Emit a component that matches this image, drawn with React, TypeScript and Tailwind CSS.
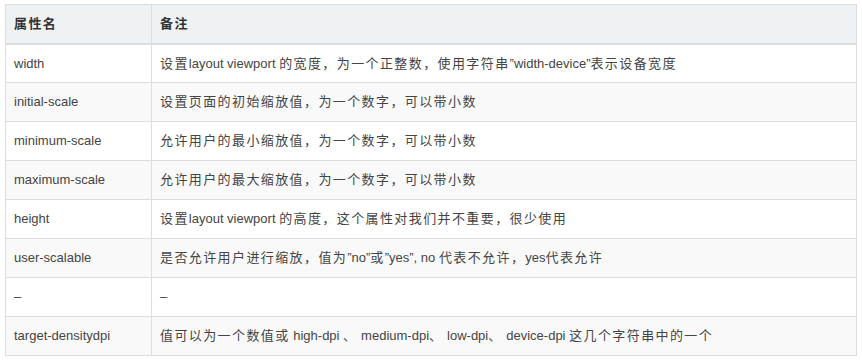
import React from "react";

const rows: [string, string][] = [
  ["width", "设置layout viewport 的宽度，为一个正整数，使用字符串”width-device”表示设备宽度"],
  ["initial-scale", "设置页面的初始缩放值，为一个数字，可以带小数"],
  ["minimum-scale", "允许用户的最小缩放值，为一个数字，可以带小数"],
  ["maximum-scale", "允许用户的最大缩放值，为一个数字，可以带小数"],
  ["height", "设置layout viewport 的高度，这个属性对我们并不重要，很少使用"],
  ["user-scalable", "是否允许用户进行缩放，值为”no”或”yes”, no 代表不允许，yes代表允许"],
  ["–", "–"],
  ["target-densitydpi", "值可以为一个数值或 high-dpi 、 medium-dpi、 low-dpi、 device-dpi 这几个字符串中的一个"],
];

function Mixed({ text }: { text: string }) {
  const parts = text.split(/([\u3000-\u303f\u4e00-\u9fff\uff00-\uffef]+)/);
  return (
    <>
      {parts.map((p, i) =>
        /[\u3000-\u303f\u4e00-\u9fff\uff00-\uffef]/.test(p) ? (
          <span key={i} className="tracking-[1.4px]">{p}</span>
        ) : (
          <span key={i}>{p}</span>
        )
      )}
    </>
  );
}

export default function App() {
  return (
    <div className="w-[862px] h-[361px] bg-white pt-[4px] pl-[5px]">
      <table
        className="w-[852px] border-collapse text-[13px] text-[#333]"
        style={{ fontFamily: '"Liberation Sans", Arial, "Noto Sans CJK SC", sans-serif' }}
      >
        <thead>
          <tr className="bg-[#eff2f5] h-[39px]">
            <th className="w-[146px] border border-[#dddddd] border-b-2 px-[8px] text-left font-bold">
              <Mixed text="属性名" />
            </th>
            <th className="border border-[#dddddd] border-b-2 px-[8px] text-left font-bold">
              <Mixed text="备注" />
            </th>
          </tr>
        </thead>
        <tbody>
          {rows.map(([a, b], i) => (
            <tr key={i} className={i % 2 === 1 ? "bg-[#f9f9f9] h-[39px]" : "bg-white h-[39px]"}>
              <td className="border border-[#dddddd] px-[8px] text-[#444]">{a}</td>
              <td className="border border-[#dddddd] px-[8px] text-[#444]">
                <Mixed text={b} />
              </td>
            </tr>
          ))}
        </tbody>
      </table>
    </div>
  );
}
